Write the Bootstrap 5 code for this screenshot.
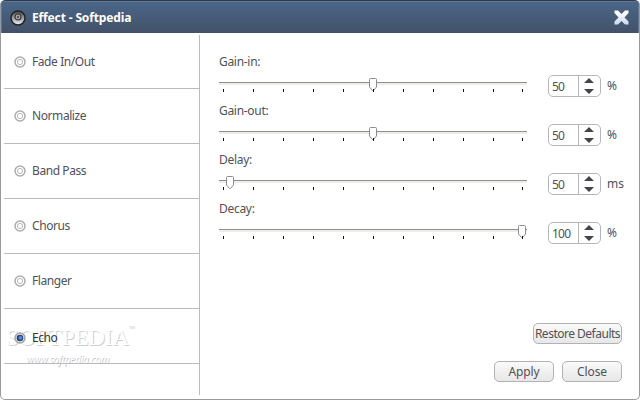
<!DOCTYPE html>
<html lang="en">
<head>
<meta charset="utf-8">
<title>Effect - Softpedia</title>
<link href="https://cdn.jsdelivr.net/npm/bootstrap@5.3.0/dist/css/bootstrap.min.css" rel="stylesheet">
<style>
body{width:640px;height:400px;overflow:hidden;background:#fff;font:12px/16px "Noto Sans","Open Sans",sans-serif;color:#505257}
.dialog{width:640px;height:400px;border:1px solid #999a9c;border-top:0;border-radius:5px;overflow:hidden;background:#fff}
.titlebar{height:33px;flex:none;margin:0 -1px;padding:1px 10px 0 11px;border:1px solid #35383d;border-bottom:0;border-radius:5px 5px 0 0;background:linear-gradient(#4a6789,#435168);box-shadow:inset 0 1px #587ba5,inset 1px 0 #587595,inset -1px 0 #587595;color:#fff}
.title{font-weight:700;font-size:12px;margin-left:6px;letter-spacing:-.14px}
.speaker{margin-left:-2px}
.sidebar{width:196px;margin:2px 0 4px 3px;border-right:1px solid #babbc4;flex:none;z-index:2}
.effect{height:55px;border-bottom:1px solid #b9bac4;padding-left:10px}
.effect:first-child{height:54px}
.effect.active{padding-top:3px;color:#333}
.effect svg{margin-right:6px}
.sidebar span{letter-spacing:-.42px}
.nm{letter-spacing:-.3px}
.params{padding:21px 0 0 19px}
.param{height:49px}
.slider{width:309px;height:49px}
.slider svg{display:block;margin-top:6px;overflow:visible}
.spin{width:53px;height:22px;margin:21px 0 0 20px;border:1px solid #b5b6bd;border-radius:5px;background:#fff}
.spin .val{width:30px;border-right:1px solid #b5b6bd;padding-left:3px;line-height:21px;letter-spacing:-.8px}
.spin svg{margin:2px 0 0 5px}
.unit{margin:22px 0 0 6px;line-height:20px}
.tool{height:21px;padding:0;border:1px solid #b2b2b6;border-radius:5px;background:linear-gradient(#fafafa,#e7e7e7);font-size:12px;line-height:18px;color:#505257;white-space:nowrap;letter-spacing:-.1px;width:60px}
.tool.wide{width:89px;letter-spacing:-.5px}
.actions{padding:0 17px 17px 0;gap:17px}
.wm{left:5px;top:324px;pointer-events:none;z-index:1}
</style>
<script src="https://cdn.jsdelivr.net/npm/bootstrap@5.3.0/dist/js/bootstrap.bundle.min.js"></script>
</head>
<body>
<svg width="0" height="0" class="position-absolute"><defs>
<linearGradient id="sp" x2="0" y2="1"><stop stop-color="#444"/><stop offset="1" stop-color="#f4f4f4"/></linearGradient>
<linearGradient id="xg" x1="0" y1="2" x2="0" y2="13" gradientUnits="userSpaceOnUse"><stop stop-color="#fff"/><stop offset="1" stop-color="#d0ddef"/></linearGradient>
<symbol id="off" viewBox="0 0 12 12"><circle cx="6" cy="6" r="5" fill="#fff" stroke="#adadad" stroke-width="1.500"/><circle cx="6" cy="6" r="2.600" fill="#fff" stroke="#b9b9b9"/></symbol>
<symbol id="on" viewBox="0 0 12 12"><circle cx="6" cy="6" r="5" fill="#e4e4e4" stroke="#a5a5a5" stroke-width="1.500"/><circle cx="6" cy="6" r="3.300" fill="#28466f"/><circle cx="6.400" cy="5.800" r="1.900" fill="#4a8be5"/></symbol>
<symbol id="arrows" viewBox="0 0 10 17"><path d="M5 0 10 5H0zM5 16 0 11h10z" fill="#454549"/></symbol>
<symbol id="thumb" viewBox="0 0 11 15"><path d="M1.500 2.500q0-1 1-1h5q1 0 1 1V10l-3 3.500h-1l-3-3.500z" fill="#fff" stroke="#8c8c90"/></symbol>
</defs></svg>
<div class="dialog d-flex flex-column position-relative">
  <header class="titlebar d-flex align-items-center">
    <svg class="speaker" width="16" height="16" viewBox="0 0 16 16"><circle cx="8" cy="8" r="7" fill="url(#sp)" stroke="#202225" stroke-width="1.500"/><circle cx="8" cy="7" r="3" fill="#aaa" stroke="#36383b" stroke-width="1.200"/><circle cx="8" cy="7" r="1.200" fill="#555"/></svg>
    <span class="title">Effect - Softpedia</span>
    <svg class="ms-auto" width="15" height="15" viewBox="0 0 15 15"><path d="M1 .500h3L7.500 4 11 .500h3.500V3L10.500 7.500l4 4v3H11L7.500 11 4 14.500H.500v-3l4-4L.500 3V.500z" fill="url(#xg)"/></svg>
  </header>
  <main class="d-flex flex-grow-1">
    <nav class="sidebar position-relative" id="effects"></nav>
    <section class="params flex-grow-1 d-flex flex-column">
      <div id="params"></div>
      <div class="actions d-flex flex-column align-items-end mt-auto">
        <button class="btn tool wide">Restore Defaults</button>
        <div class="d-flex gap-2"><button class="btn tool">Apply</button><button class="btn tool">Close</button></div>
      </div>
    </section>
  </main>
  <svg class="wm position-absolute" width="140" height="48">
    <g font-family="Liberation Serif,serif" font-size="23"><text x="1" y="22" textLength="123" fill="#cfcfcf">SOFTPEDIA</text><text x="0" y="21" textLength="123" fill="#fff">SOFTPEDIA</text></g>
    <text x="123" y="8" font-size="8" textLength="8" fill="#d2d2d2">™</text>
    <g font-family="Noto Sans,sans-serif" font-size="10" font-style="italic"><text x="21" y="40" textLength="83" fill="#bdbdbd">www.softpedia.com</text><text x="20.300" y="39.300" textLength="83" fill="#fff">www.softpedia.com</text></g>
  </svg>
</div>
<script>
document.getElementById('effects').innerHTML=['Fade In/Out','Normalize','Band Pass','Chorus','Flanger','Echo'].map((n,i)=>
 `<div class="effect d-flex align-items-center ${i==5?'active':''}"><svg width="12" height="12"><use href="#${i==5?'on':'off'}"/></svg><span>${n}</span></div>`).join('');
document.getElementById('params').innerHTML=[['Gain-in:',150,50,'%'],['Gain-out:',150,50,'%'],['Delay:',7,50,'ms'],['Decay:',299,100,'%']].map(([n,p,v,u])=>{
 let t='';for(let i=0;i<11;i++)t+=`<rect x="${i==10?303:4+30*i}" y="13" width="1" height="3" fill="#111"/>`;
 return `<div class="param d-flex"><div class="slider"><div class="nm">${n}</div><svg width="309" height="20"><rect y="6" width="308" height="1" fill="#8f8f8c"/><rect y="7" width="308" height="2" rx="1" fill="#eeeee6"/><use href="#thumb" x="${p-1}" y="1" width="11" height="15"/>${t}</svg></div><div class="spin d-flex"><div class="val">${v}</div><svg width="10" height="17"><use href="#arrows"/></svg></div><div class="unit">${u}</div></div>`}).join('');
</script>
</body>
</html>
